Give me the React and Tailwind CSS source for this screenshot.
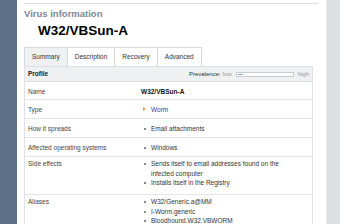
const rows = [
  { label: "Type", items: [{ text: "Worm", type: "link" }] },
  { label: "How it spreads", items: [{ text: "Email attachments" }] },
  { label: "Affected operating systems", items: [{ text: "Windows" }] },
];

const Bullet = ({ arrow }) =>
  arrow ? (
    <span className="inline-block w-0 h-0 border-y-[2.5px] border-y-transparent border-l-[3px] border-l-[#f0a030] mt-[2px] ml-[2px] mr-[5px]" />
  ) : (
    <span className="inline-block w-[2px] h-[2px] bg-[#888] mt-[4px] ml-[3px] mr-[5px]" />
  );

const Item = ({ text, type }) => (
  <div className="flex items-start leading-[9.5px]">
    <Bullet arrow={type === "link"} />
    <span className={type === "link" ? "text-[#3a3a96]" : "text-[#333]"}>{text}</span>
  </div>
);

const Row = ({ label, children, className = "", top = "pt-[5px]" }) => (
  <div className={`flex border-b border-[#e6e6e6] ${className}`}>
    <div className={`w-[113px] pl-[3px] text-[#444] ${top}`}>{label}</div>
    <div className={`flex-1 pl-[3px] ${top}`}>{children}</div>
  </div>
);

const tabs = ["Summary", "Description", "Recovery", "Advanced"];

export default function App() {
  return (
    <div className="w-[340px] h-[224px] flex overflow-hidden bg-white font-['Liberation_Sans',Arial,sans-serif] text-[6.5px]">
      <div className="w-[17px] shrink-0 bg-[#5b6f87]" />

      <div className="flex-1 pl-[7px] pr-[5px] border-r border-[#ececec]">
        <div className="mt-[3px] border-t border-[#dedede] w-[294px]" />

        <div className="w-[289px]">
          <h2 className="mt-[4px] text-[9.5px] font-bold text-[#7c8797] leading-[12px]">Virus information</h2>
          <h1 className="mt-[4px] ml-[14px] text-[13.5px] font-bold text-black leading-[14px]">W32/VBSun-A</h1>

          {/* tabs */}
          <div className="mt-[9px] flex h-[19px]">
            {tabs.map((t, i) => (
              <div
                key={t}
                className={`px-[7px] flex items-center border-t border-r border-[#d6d9dd] text-[#333] ${
                  i === 0 ? "border-l bg-[#eef0f2]" : "bg-white"
                }`}
              >
                {t}
              </div>
            ))}
          </div>

          {/* panel */}
          <div className="border-l border-r border-[#dfe2e5]">
            <div className="h-[16px] flex items-center justify-between bg-[#eef0f2] border-y border-[#dcdfe3] px-[3px]">
              <span className="font-bold text-[#222]">Profile</span>
              <div className="flex items-center gap-[2px] text-[6px]">
                <span className="text-[#333]">Prevalence:</span>
                <span className="text-[#999]">low</span>
                <div className="w-[58px] h-[5px] mx-[2px] border border-[#c8ccd2] bg-white relative">
                  <div className="absolute left-[1px] top-[1px] w-[5px] h-[1px] bg-[#8aa0c8]" />
                </div>
                <span className="text-[#999]">high</span>
              </div>
            </div>

            <Row label="Name" className="h-[18px]">
              <span className="font-bold text-[#111]">W32/VBSun-A</span>
            </Row>
            {rows.map((r) => (
              <Row key={r.label} label={r.label} className="h-[19px]">
                {r.items.map((it) => (
                  <Item key={it.text} {...it} />
                ))}
              </Row>
            ))}
            <Row label="Side effects" className="h-[38px]" top="pt-[2px]">
              <Item text="Sends itself to email addresses found on the" />
              <div className="pl-[10px] leading-[9.5px] text-[#333]">infected computer</div>
              <Item text="Installs itself in the Registry" />
            </Row>
            <Row label="Aliases" className="h-[40px]" top="pt-[2px]">
              <Item text="W32/Generic.a@MM" />
              <Item text="I-Worm.generic" />
              <Item text="Bloodhound.W32.VBWORM" />
            </Row>
          </div>
        </div>
      </div>

      <div className="w-[13px] shrink-0 bg-[#dde0e3]" />
    </div>
  );
}
